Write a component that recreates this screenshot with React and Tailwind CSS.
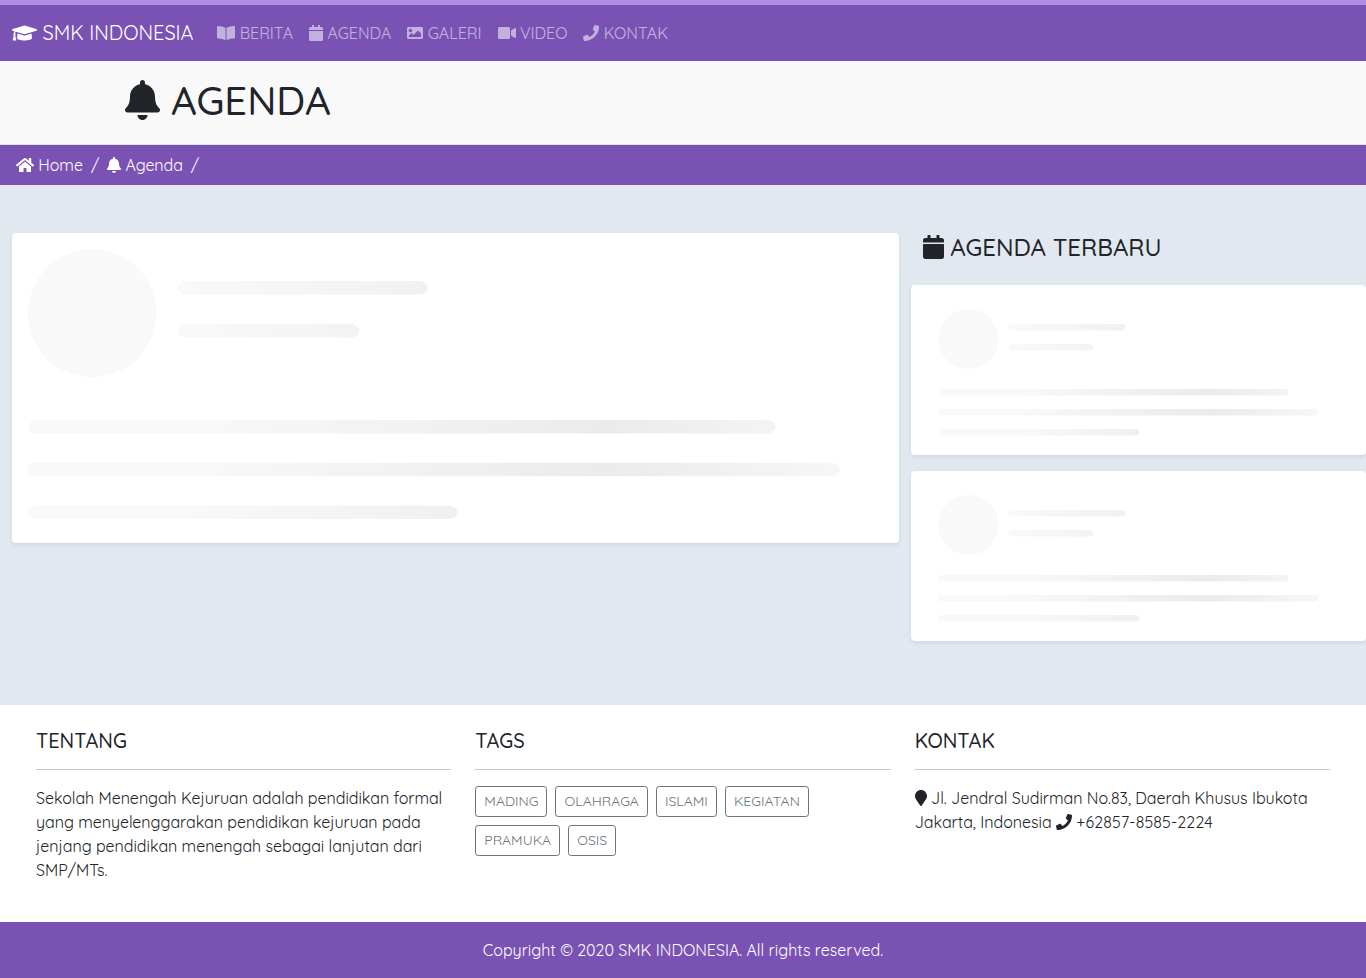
import React, { useId } from "react";
import {
  FaGraduationCap,
  FaBookOpen,
  FaCalendar,
  FaImage,
  FaVideo,
  FaPhone,
  FaBell,
  FaHome,
  FaMapMarker,
} from "react-icons/fa";

const ICON = "inline-block h-[1em] align-[-0.125em]";

const NAV = [
  { label: "BERITA", Icon: FaBookOpen, width: "w-[1.125em]" },
  { label: "AGENDA", Icon: FaCalendar, width: "w-[0.875em]" },
  { label: "GALERI", Icon: FaImage, width: "w-[1em]" },
  { label: "VIDEO", Icon: FaVideo, width: "w-[1.125em]" },
  { label: "KONTAK", Icon: FaPhone, width: "w-[1em]" },
];

const TAGS = ["MADING", "OLAHRAGA", "ISLAMI", "KEGIATAN", "PRAMUKA", "OSIS"];

function Navbar() {
  return (
    <nav className="flex h-[61px] items-center border-t-[5px] border-[#b08ce3] bg-[#7952b3] px-3">
      <a href="#" className="mr-[15.7px] text-xl leading-[30px] whitespace-nowrap text-white">
        <FaGraduationCap className={`${ICON} w-[1.25em]`} /> SMK INDONESIA
      </a>
      <ul className="flex">
        {NAV.map(({ label, Icon, width }) => (
          <li key={label}>
            <a href="#" className="block p-2 whitespace-nowrap text-white/55">
              <Icon className={`${ICON} ${width}`} /> {label}
            </a>
          </li>
        ))}
      </ul>
    </nav>
  );
}

function Loader({ className, viewBox = "0 0 400 130" }) {
  const id = useId();
  return (
    <svg viewBox={viewBox} className={`block ${className}`}>
      <defs>
        <linearGradient id={id} gradientUnits="userSpaceOnUse" x1="0" y1="0" x2="400" y2="0">
          <stop offset="0.18" stopColor="#f9f9f9" />
          <stop offset="0.68" stopColor="#ebebeb" />
          <stop offset="1" stopColor="#f9f9f9" />
        </linearGradient>
      </defs>
      <g fill={`url(#${id})`}>
        <circle cx="30" cy="30" r="30" />
        <rect x="70" y="15" rx="4" ry="4" width="117" height="6.4" />
        <rect x="70" y="35" rx="4" ry="4" width="85" height="6.4" />
        <rect x="0" y="80" rx="4" ry="4" width="350" height="6.4" />
        <rect x="0" y="100" rx="4" ry="4" width="380" height="6.4" />
        <rect x="0" y="120" rx="4" ry="4" width="201" height="6.4" />
      </g>
    </svg>
  );
}

function FooterColumn({ title, children }) {
  return (
    <section>
      <h5 className="text-xl leading-6 font-medium">{title}</h5>
      <hr className="my-4 border-[#212529]/25" />
      {children}
    </section>
  );
}

export default function App() {
  return (
    <div className="min-h-screen bg-white font-[Quicksand,sans-serif] text-base text-[#212529]">
      <Navbar />

      <header className="h-[84px] border-b border-[#dee2e6] bg-[#f9f9f9] pt-[15px]">
        <div className="mx-auto w-[1140px] px-3">
          <h1 className="text-[40px] leading-[48px] font-medium">
            <FaBell className={`${ICON} w-[0.875em]`} /> AGENDA
          </h1>
        </div>
      </header>

      <ol className="flex bg-[#7952b3] px-4 py-2 tracking-[-0.06px] text-white">
        <li>
          <a href="#"><FaHome className={`${ICON} w-[1.125em]`} /> Home</a>
        </li>
        <li className="px-2">/</li>
        <li>
          <a href="#"><FaBell className={`${ICON} w-[0.875em]`} /> Agenda</a>
        </li>
        <li className="px-2">/</li>
      </ol>

      <main className="grid h-[520px] grid-cols-3 items-start bg-[#e2e8f0] pt-12">
        <div className="col-span-2 px-3">
          <div className="rounded bg-white p-4 shadow-[0_2px_4px_rgba(0,0,0,0.075)]">
            <Loader className="w-full" />
          </div>
        </div>
        <aside>
          <h4 className="mb-[23px] px-3 text-2xl leading-[29px] font-medium">
            <FaCalendar className={`${ICON} w-[0.875em]`} /> AGENDA TERBARU
          </h4>
          <div className="flex flex-col gap-4">
            {[0, 1].map((n) => (
              <div key={n} className="rounded bg-white pt-6 pb-4 shadow-[0_2px_4px_rgba(0,0,0,0.075)]">
                <Loader viewBox="-0.4 0 400 130" className="mx-auto h-[130px] w-[400px]" />
              </div>
            ))}
          </div>
        </aside>
      </main>

      <footer>
        <div className="grid h-[217px] grid-cols-3 gap-6 px-9 pt-6">
          <FooterColumn title="TENTANG">
            <p className="tracking-[-0.035px]">
              Sekolah Menengah Kejuruan adalah pendidikan formal yang menyelenggarakan pendidikan
              kejuruan pada jenjang pendidikan menengah sebagai lanjutan dari SMP/MTs.
            </p>
          </FooterColumn>
          <FooterColumn title="TAGS">
            <div className="flex flex-wrap gap-2">
              {TAGS.map((tag) => (
                <button
                  key={tag}
                  className="rounded-[3.2px] border border-[#6c757d] px-2 py-1 text-sm leading-[21px] text-[#6c757d]"
                >
                  {tag}
                </button>
              ))}
            </div>
          </FooterColumn>
          <FooterColumn title="KONTAK">
            <p className="tracking-[-0.02px]">
              <FaMapMarker className={`${ICON} w-[0.75em]`} /> Jl. Jendral Sudirman No.83, Daerah
              Khusus Ibukota Jakarta, Indonesia <FaPhone className={`${ICON} w-[1em]`} />{" "}
              <span className="tracking-[0.15px]">+62857-8585-2224</span>
            </p>
          </FooterColumn>
        </div>
        <div className="bg-[#7952b3] py-4 text-center text-white">
          Copyright © 2020 SMK INDONESIA. All rights reserved.
        </div>
      </footer>
    </div>
  );
}
